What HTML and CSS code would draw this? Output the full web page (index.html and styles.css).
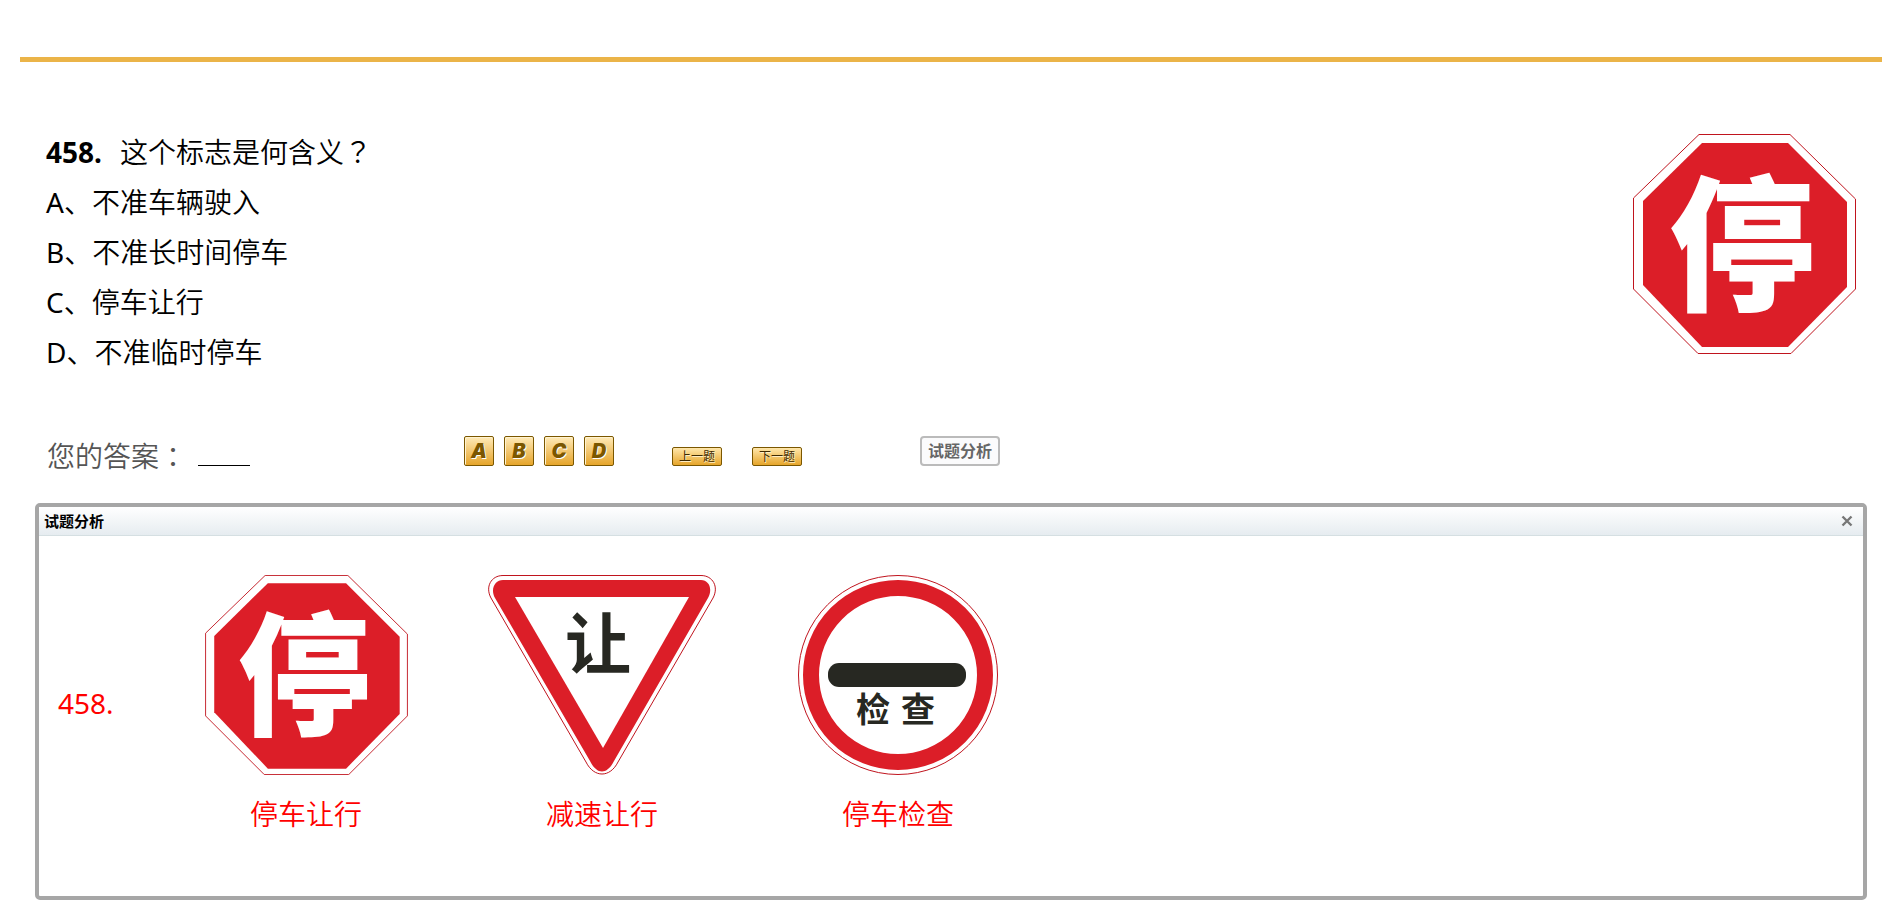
FILE: index.html
```html
<!DOCTYPE html>
<html lang="zh-CN">
<head>
  <meta charset="UTF-8">
  <title>458. 这个标志是何含义？</title>
  <meta name="viewport" content="width=device-width, initial-scale=1.0">
  <link rel="stylesheet" href="styles.css">
</head>
<body>
  <hr class="bar">

  <main>
    <section class="question">
      <div class="question-text">
        <h1><b>458.</b>这个标志是何含义<span class="mark" lang="zh-TW">？</span></h1>
        <p><span class="letter">A</span>、不准车辆驶入</p>
        <p><span class="letter">B</span>、不准长时间停车</p>
        <p><span class="letter">C</span>、停车让行</p>
        <p><span class="letter">D</span>、不准临时停车</p>
      </div>
      <svg class="question-sign" viewBox="0 0 223 220">
        <!-- stop sign, reused in the analysis panel -->
        <g id="stop">
          <path d="M66 .5H157L222.500 65V155L158 219.500H65L.5 155V64Z" fill="#fff" stroke="#c0141e"/>
          <path d="M69 9H155L214 68V153L155 213H69L10 151V67Z" fill="#dc1e28"/>
          <text class="sign-text" x="109" y="165" font-size="146" text-anchor="middle" fill="#fff">停</text>
        </g>
      </svg>
    </section>

    <section class="answer">
      <div class="your-answer">您的答案<span class="mark" lang="zh-TW">：</span><span class="blank"></span></div>
      <div class="choices">
        <button class="choice">A</button>
        <button class="choice">B</button>
        <button class="choice">C</button>
        <button class="choice">D</button>
      </div>
      <div class="pager">
        <button class="step">上一题</button>
        <button class="step">下一题</button>
      </div>
      <button class="analysis-btn">试题分析</button>
    </section>

    <section class="panel">
      <header class="panel-head">
        <h2>试题分析</h2>
        <button class="close" aria-label="关闭">
          <svg width="12" height="12" viewBox="0 0 12 12"><path d="M1.500 1.500L10.500 10.500M10.500 1.500L1.500 10.500" stroke="#777" stroke-width="2.400"/></svg>
        </button>
      </header>
      <div class="panel-body">
        <span class="number">458.</span>
        <figure>
          <svg width="203" height="200" viewBox="0 0 223 220"><use href="#stop"/></svg>
          <figcaption>停车让行</figcaption>
        </figure>
        <figure>
          <svg width="228" height="200" viewBox="0 0 228 200">
            <path d="M15 .5H213C225 .5 231 12 225 23L130 187C122 203 106 203 98 187L3 23C-3 12 3 .5 15 .5Z" fill="#fff" stroke="#c0141e"/>
            <path d="M15 5H213C221 5 225 14 220 23L126 186C119 200 109 200 102 186L7 23C2 14 7 5 15 5Z" fill="#dc1e28"/>
            <path d="M27 22H201L115 173Z" fill="#fff"/>
            <text class="sign-small" x="110" y="93" font-size="66" text-anchor="middle" fill="#272822">让</text>
          </svg>
          <figcaption>减速让行</figcaption>
        </figure>
        <figure>
          <svg width="200" height="200" viewBox="0 0 200 200">
            <circle cx="100" cy="100" r="99.500" fill="#fff" stroke="#c0141e"/>
            <circle cx="100" cy="100" r="87" fill="none" stroke="#dc1e28" stroke-width="16"/>
            <rect x="30" y="88" width="138" height="24" rx="11" fill="#272822"/>
            <g class="sign-small" font-size="34" text-anchor="middle" fill="#272822">
              <text x="75" y="147">检</text>
              <text x="120" y="147">查</text>
            </g>
          </svg>
          <figcaption>停车检查</figcaption>
        </figure>
      </div>
    </section>
  </main>
</body>
</html>
```

FILE: styles.css
```css
* {
  margin: 0;
  padding: 0;
  box-sizing: border-box;
}

body {
  font-family: "Noto Sans", "Noto Sans CJK SC", sans-serif;
  font-size: 28px;
  font-weight: 350;
  line-height: 50px;
  color: #000;
  background: #fff;
  padding: 57px 5px 19px 20px;
}

button {
  font-family: inherit;
  cursor: pointer;
}

svg {
  display: block;
}

.bar {
  height: 5px;
  border: none;
  background: #ebb448;
}

main {
  padding: 65px 15px 0;
}

/* question */
.question {
  display: flex;
  justify-content: space-between;
  padding: 0 11px;
}

.question h1,
.question p {
  font-size: 28px;
  font-weight: 350;
}

.question h1 b {
  font-weight: 700;
  margin-right: 18px;
}

.letter {
  font-weight: 400;
}

/* full-width punctuation centred in its cell */
.mark {
  font-family: "Noto Sans CJK TC", sans-serif;
  line-height: 20px;
}

.question-sign {
  width: 223px;
  height: 220px;
  margin-top: 7px;
  overflow: visible;
}

.sign-text {
  font-family: "Noto Sans CJK SC", sans-serif;
  font-weight: 900;
}

.sign-small {
  font-family: "Noto Sans CJK SC", sans-serif;
  font-weight: 700;
}

/* answer row */
.answer {
  display: flex;
  align-items: flex-end;
  height: 89px;
  padding-left: 12px;
}

.your-answer {
  display: flex;
  align-items: flex-end;
  width: 417px;
  line-height: 20px;
  color: #555;
}

.blank {
  width: 52px;
  margin-left: 11px;
  border-bottom: 1px solid #000;
}

.choices {
  display: flex;
  gap: 10px;
  width: 208px;
}

.choice {
  width: 30px;
  height: 30px;
  border: 1px solid #7b5700;
  border-radius: 2px;
  background: linear-gradient(#ffeab8, #e6a52b);
  box-shadow: inset 1px 1px #fff3d0;
  color: #7b5700;
  font-family: Inter, sans-serif;
  font-size: 20px;
  line-height: 28px;
  font-style: italic;
  font-weight: 900;
  text-shadow: 1px 1px #fff;
}

.pager {
  display: flex;
  gap: 30px;
  width: 248px;
}

.step {
  width: 50px;
  height: 19px;
  border: 1px solid #7b5700;
  border-radius: 2px;
  background: linear-gradient(#ffe7ab, #e6a52b);
  color: #3e2a00;
  font-size: 12px;
  line-height: 17px;
  text-shadow: 1px 1px #ffeec4;
}

.analysis-btn {
  width: 80px;
  height: 30px;
  border: 2px solid #bbb;
  border-radius: 4px;
  background: #fbfbfc;
  color: #666;
  font-size: 16px;
  font-weight: 700;
  line-height: 24px;
}

/* analysis panel */
.panel {
  min-height: 397px;
  margin-top: 37px;
  border: 4px solid #a6a6a6;
  border-radius: 5px;
}

.panel-head {
  display: flex;
  justify-content: space-between;
  align-items: center;
  height: 29px;
  padding: 0 10px 0 5px;
  border-bottom: 1px solid #d5dfe2;
  background: linear-gradient(#fff, #e6ecf0);
}

.panel-head h2 {
  font-size: 15px;
  line-height: 28px;
}

.close {
  border: none;
  background: none;
}

.panel-body {
  display: flex;
  align-items: center;
  padding: 39px 0 0 19px;
  color: #f00;
}

.number {
  width: 100px;
  padding-bottom: 8px;
  font-weight: 400;
}

.panel-body figure {
  display: flex;
  flex-direction: column;
  align-items: center;
  gap: 14px;
  width: 296px;
}
```
